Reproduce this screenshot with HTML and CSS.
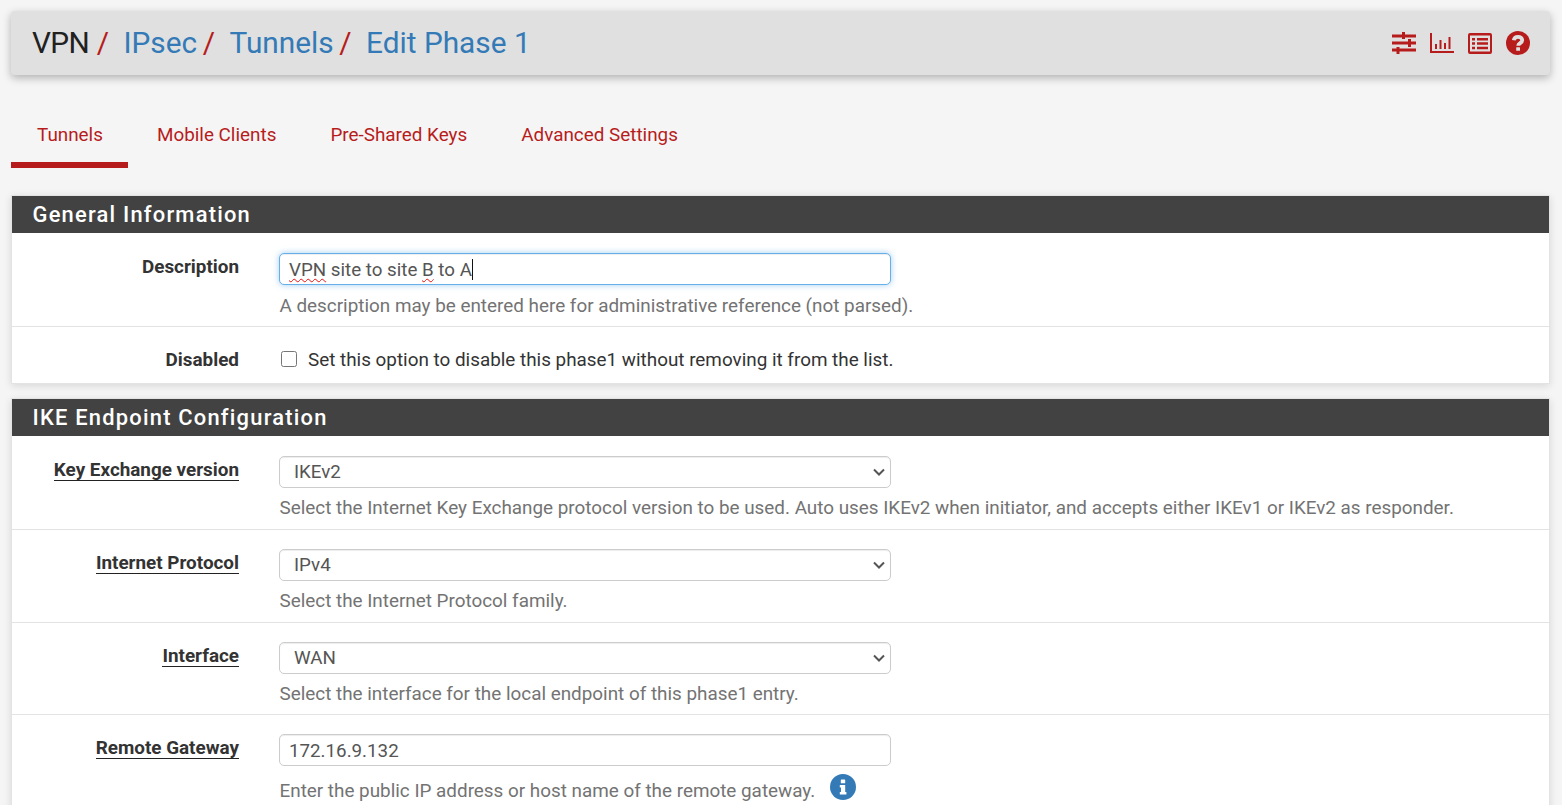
FILE: index.html
```html
<!DOCTYPE html>
<html lang="en">
<head>
<meta charset="utf-8">
<title>VPN / IPsec / Tunnels / Edit Phase 1</title>
<link rel="stylesheet" href="styles.css">
</head>
<body>
<header class="crumbs">
  <h1 class="crumb-title">
    <span class="crumb-root">VPN</span><span class="sep">/</span>
    <a class="crumb-link" href="#">IPsec</a><span class="sep">/</span>
    <a class="crumb-link" href="#">Tunnels</a><span class="sep">/</span>
    <a class="crumb-link" href="#">Edit Phase 1</a>
  </h1>
  <div class="crumb-icons">
    <svg class="ico" viewBox="0 0 24 22" width="24" height="22"><path d="M0 2.500h24v3H0zM0 9.500h24v3H0zM0 16.500h24v3H0z"/><path d="M10 0h3v7h-3zM16 7h3v8h-3zM4.500 15h3v7h-3z"/></svg>
    <svg class="ico" viewBox="0 0 24 22" width="24" height="22"><path d="M0 1h2v18h22v2H0z"/><path d="M5 12h2v5H5zM9.500 8h2v9h-2zM14 11h2v6h-2zM18.500 5h2v12h-2z"/></svg>
    <svg class="ico" viewBox="0 0 24 21" width="24" height="21"><path fill-rule="evenodd" d="M2 0h20a2 2 0 0 1 2 2v17a2 2 0 0 1-2 2H2a2 2 0 0 1-2-2V2a2 2 0 0 1 2-2zM2 2.500v16h20v-16z"/><path d="M4 5h3v2.500H4zM9 5h11v2.500H9zM4 9.300h3v2.500H4zM9 9.300h11v2.500H9zM4 13.700h3v2.500H4zM9 13.700h11v2.500H9z"/></svg>
    <svg class="ico" viewBox="0 0 24 24" width="24" height="24"><circle cx="12" cy="12" r="12"/><path class="q-mark" d="M7.800 9.300c.3-2.300 2-3.500 4.200-3.500 2.400 0 4.200 1.400 4.200 3.400 0 2.900-4 2.800-4 5.500"/><rect class="q-dot" x="10.200" y="16.300" width="3.800" height="3.400" rx=".5"/></svg>
  </div>
</header>

<nav class="tabs">
  <a class="tab tab-active" href="#">Tunnels</a>
  <a class="tab" href="#">Mobile Clients</a>
  <a class="tab" href="#">Pre-Shared Keys</a>
  <a class="tab" href="#">Advanced Settings</a>
</nav>

<section class="panel">
  <h2 class="panel-title">General Information</h2>
  <div class="row">
    <span class="label">Description</span>
    <div class="field">
      <div class="text-input focused"><span class="typo">VPN</span> site to site <span class="typo">B</span> to A<span class="caret"></span></div>
      <p class="help">A description may be entered here for administrative reference (not parsed).</p>
    </div>
  </div>
  <div class="row row-check">
    <span class="label label-check">Disabled</span>
    <label class="check"><input type="checkbox" class="checkbox">Set this option to disable this phase1 without removing it from the list.</label>
  </div>
</section>

<section class="panel">
  <h2 class="panel-title">IKE Endpoint Configuration</h2>
  <div class="row">
    <span class="label"><span class="ul">Key Exchange version</span></span>
    <div class="field">
      <select class="select"><option>IKEv2</option></select>
      <p class="help">Select the Internet Key Exchange protocol version to be used. Auto uses IKEv2 when initiator, and accepts either IKEv1 or IKEv2 as responder.</p>
    </div>
  </div>
  <div class="row">
    <span class="label"><span class="ul">Internet Protocol</span></span>
    <div class="field">
      <select class="select"><option>IPv4</option></select>
      <p class="help">Select the Internet Protocol family.</p>
    </div>
  </div>
  <div class="row">
    <span class="label"><span class="ul">Interface</span></span>
    <div class="field">
      <select class="select"><option>WAN</option></select>
      <p class="help">Select the interface for the local endpoint of this phase1 entry.</p>
    </div>
  </div>
  <div class="row">
    <span class="label"><span class="ul">Remote Gateway</span></span>
    <div class="field">
      <div class="text-input">172.16.9.132</div>
      <p class="help">Enter the public IP address or host name of the remote gateway.<svg class="info" viewBox="0 0 26 26" width="26" height="26"><circle cx="13" cy="13" r="13"/><rect class="info-mark" x="10.800" y="5.500" width="4.400" height="3.800" rx=".6"/><path class="info-mark" d="M9.800 11h5.400v7h1.200v2.600H9.800V18H11v-4.400H9.800z"/></svg></p>
    </div>
  </div>
</section>
</body>
</html>
```
FILE: styles.css
```css
* { box-sizing: border-box; }
html, body { height: 805px; overflow: hidden; }
body {
  margin: 0;
  padding: 11px 12px 0 11px;
  background: #f5f5f5;
  color: #333;
  font-family: Roboto, "Liberation Sans", sans-serif;
  font-size: 18.880px;
  line-height: 25px;
}
.crumbs {
  height: 64px;
  padding: 0 20px 0 21px;
  display: flex;
  align-items: center;
  justify-content: space-between;
  background: #e0e0e0;
  border-radius: 4px;
  box-shadow: 0 3px 8px rgba(0,0,0,.28);
}
.crumb-title { margin: 0 0 2px; font-size: 29.800px; font-weight: 400; line-height: 33px; white-space: nowrap; }
.crumb-root { color: #212121; letter-spacing: -.6px; margin-right: 1.800px; }
.sep { color: #b71c1c; margin: 0 5px 0 5.700px; }
.crumb-link { color: #337ab7; text-decoration: none; margin-left: 2px; }
.crumb-icons { display: flex; align-items: center; gap: 14px; }
.ico { display: block; fill: #b71c1c; }
.q-mark { fill: none; stroke: #e0e0e0; stroke-width: 3.800; }
.q-dot { fill: #e0e0e0; }

.tabs { display: flex; height: 93px; margin-bottom: 27px; align-items: stretch; padding-top: 28px; }
.tab {
  padding: 19px 25.500px 0 26px;
  margin-right: 2.500px;
  height: 65px;
  color: #b71c1c;
  text-decoration: none;
  line-height: 25px;
}
.tab-active { border-bottom: 6px solid #b71c1c; }

.panel {
  background: #fff;
  border: 1px solid #e3e3e3;
  margin-bottom: 14px;
  box-shadow: 0 2px 8px rgba(0,0,0,.12);
}
.panel-title {
  margin: 0 0 1px;
  height: 37px;
  padding: 0 20px 0 20.500px;
  background: #424242;
  color: #fff;
  font-size: 21.900px;
  font-weight: 500;
  line-height: 37px;
  letter-spacing: 1.220px;
}
.row {
  display: grid;
  grid-template-columns: 227px 1fr;
  column-gap: 40px;
  padding: 19px 0 0;
  height: 92.800px;
  border-bottom: 1px solid #e3e3e3;
}
.row:last-child { border-bottom: 0; }
.row-check { height: 56.200px; padding-top: 20.200px; }
.label { font-weight: 700; text-align: right; color: #333; line-height: 25px; margin-top: 1px; }
.label-check { margin-top: 0; }
.ul { display: inline-block; line-height: 20px; border-bottom: 1.500px solid #222; }
.field { width: 1000px; }
.text-input {
  width: 612px;
  height: 32px;
  padding: 0 9px;
  border: 1px solid #ccc;
  border-radius: 5px;
  background: #fff;
  color: #555;
  font-size: 18.750px;
  line-height: 32px;
  white-space: nowrap;
  box-shadow: inset 0 1px 1px rgba(0,0,0,.075);
}
.focused {
  border-color: #66afe9;
  box-shadow: inset 0 1px 1px rgba(0,0,0,.075), 0 0 6px rgba(102,175,233,.6);
}
.typo { text-decoration: underline wavy #e81010 1.250px; text-underline-offset: 2px; }
.caret { display: inline-block; width: 1.500px; height: 21px; margin-left: 0; background: #111; vertical-align: -4px; }
.select {
  display: block;
  width: 612px;
  height: 32px;
  padding: 0 6px 0 14px;
  border: 1px solid #ccc;
  border-radius: 5px;
  appearance: none;
  background: #fff url("data:image/svg+xml,%3Csvg xmlns='http://www.w3.org/2000/svg' width='12' height='8' viewBox='0 0 12 8'%3E%3Cpath d='M1 1.500l5 5 5-5' fill='none' stroke='%23555' stroke-width='2'/%3E%3C/svg%3E") no-repeat right 5px center;
  color: #555;
  font-family: inherit;
  font-size: 18.750px;
  box-shadow: inset 0 1px 1px rgba(0,0,0,.075);
}
.help { margin: 7.500px 0 0 .5px; color: #737373; line-height: 26px; white-space: nowrap; }
.check { display: flex; align-items: center; height: 25px; color: #333; margin-top: 0; }
.checkbox { width: 16px; height: 16px; margin: 0 11px 0 2px; }
.info { fill: #337ab7; vertical-align: -3px; margin-left: 15px; }
.info-mark { fill: #fff; }
```
